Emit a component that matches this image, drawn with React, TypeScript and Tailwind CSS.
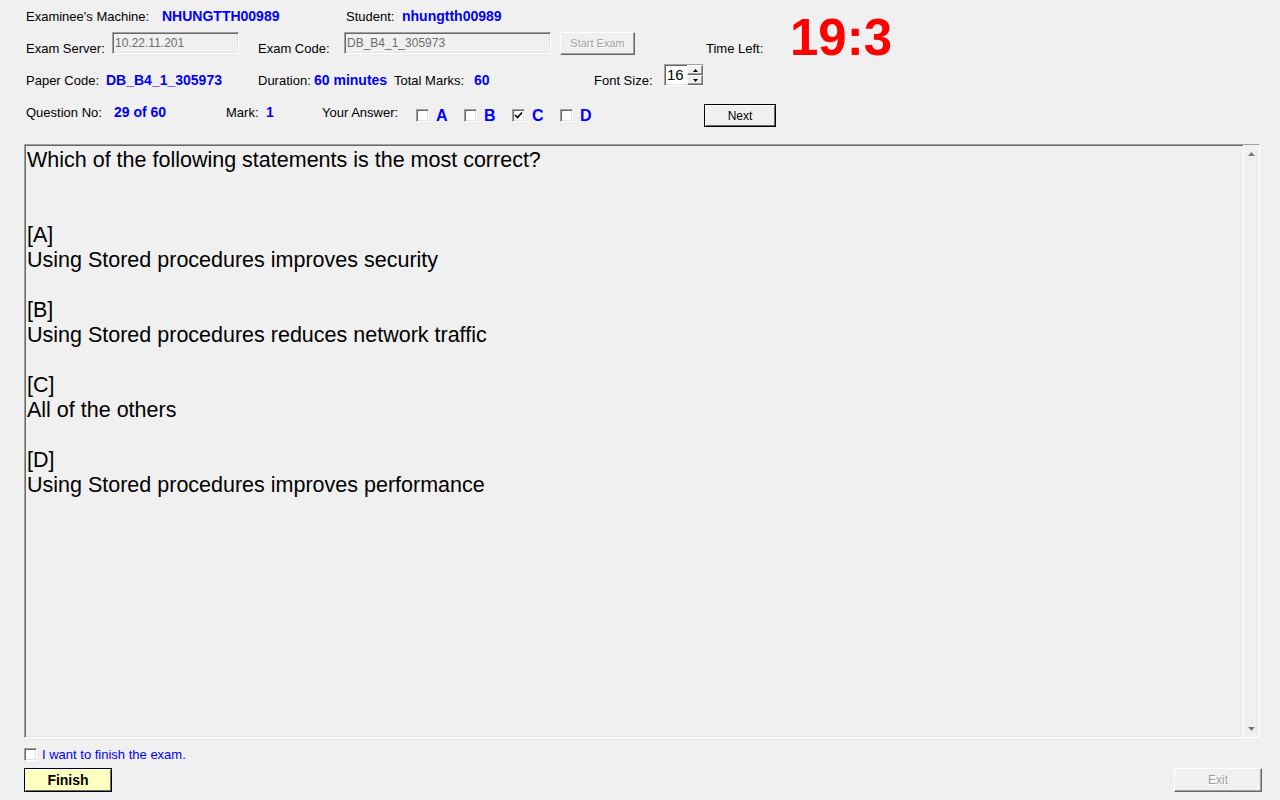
import type { ReactNode } from 'react'

const SUNKEN =
  'border border-t-[#a0a0a0] border-l-[#a0a0a0] border-b-white border-r-white shadow-[inset_1px_1px_0_#696969,inset_-1px_-1px_0_#e3e3e3]'
const RAISED =
  'border border-t-white border-l-white border-b-[#696969] border-r-[#696969] shadow-[inset_-1px_-1px_0_#a0a0a0]'
const DEFAULT_BTN = 'border border-black shadow-[inset_1px_1px_0_#ffffff,inset_-1px_-1px_0_#696969]'

const LINES = [
  'Which of the following statements is the most correct?',
  '',
  '',
  '[A]',
  'Using Stored procedures improves security',
  '',
  '[B]',
  'Using Stored procedures reduces network traffic',
  '',
  '[C]',
  'All of the others',
  '',
  '[D]',
  'Using Stored procedures improves performance',
]

function CheckBox({ checked }: { checked?: boolean }) {
  return (
    <div className={`flex h-[13px] w-[13px] shrink-0 items-center justify-center bg-white ${SUNKEN}`}>
      {checked && (
        <svg width="9" height="9" viewBox="0 0 9 9">
          <polyline points="1,4 3.5,6.5 8,1.5" fill="none" stroke="#000" strokeWidth="1.7" />
        </svg>
      )}
    </div>
  )
}

function Answer({ letter, checked }: { letter: string; checked?: boolean }) {
  return (
    <div className="flex w-[48px] items-start">
      <div className="mt-[13px]">
        <CheckBox checked={checked} />
      </div>
      <span className="mt-[11px] ml-[7px] text-[16px] leading-[18px] font-bold text-[#0000ff]">{letter}</span>
    </div>
  )
}

function Arrow({ down }: { down?: boolean }) {
  return (
    <div className="flex h-[17px] items-center justify-center">
      <svg width="7" height="4" viewBox="0 0 7 4">
        <polygon points={down ? '0,0 7,0 3.5,4' : '0,4 7,4 3.5,0'} fill="#7a7a7a" />
      </svg>
    </div>
  )
}

function Text({ children, className = '' }: { children: ReactNode; className?: string }) {
  return <span className={`mt-[9px] leading-[15px] ${className}`}>{children}</span>
}

export default function App() {
  return (
    <div className="h-[800px] w-full overflow-hidden bg-[#f0f0f0] font-['Liberation_Sans',Arial,sans-serif] text-[13px] text-black">
      {/* top: rows 1-2 + timer */}
      <div className="flex">
        <div className="w-[790px] shrink-0 pl-[26px]">
          <div className="flex h-[32px] items-start">
            <Text className="w-[136px]">Examinee's Machine:</Text>
            <Text className="w-[184px] text-[14px] font-bold text-[#0000ff]">NHUNGTTH00989</Text>
            <Text className="w-[56px]">Student:</Text>
            <Text className="text-[14px] font-bold text-[#0000ff]">nhungtth00989</Text>
          </div>
          <div className="flex h-[32px] items-start">
            <Text className="w-[86px]">Exam Server:</Text>
            <div className={`flex h-[22px] w-[127px] items-center pl-[2px] text-[12px] text-[#6d6d6d] ${SUNKEN}`}>
              10.22.11.201
            </div>
            <Text className="ml-[19px] w-[86px]">Exam Code:</Text>
            <div className={`flex h-[22px] w-[207px] items-center pl-[2px] text-[12px] text-[#6d6d6d] ${SUNKEN}`}>
              DB_B4_1_305973
            </div>
            <div
              className={`ml-[9px] flex h-[23px] w-[75px] items-center justify-center text-[11px] text-[#a0a0a0] [text-shadow:1px_1px_0_#ffffff] ${RAISED}`}
            >
              Start Exam
            </div>
            <Text className="ml-[71px]">Time Left:</Text>
          </div>
        </div>
        <div className="mt-[12px] text-[51px] leading-[51px] font-bold text-[#ff0000]">19:3</div>
      </div>

      {/* row 3 */}
      <div className="flex h-[32px] items-start pl-[26px]">
        <Text className="w-[80px]">Paper Code:</Text>
        <Text className="w-[152px] text-[14px] font-bold text-[#0000ff]">DB_B4_1_305973</Text>
        <Text className="w-[56px]">Duration:</Text>
        <Text className="w-[80px] text-[14px] font-bold text-[#0000ff]">60 minutes</Text>
        <Text className="w-[80px]">Total Marks:</Text>
        <Text className="w-[120px] text-[14px] font-bold text-[#0000ff]">60</Text>
        <Text className="w-[70px]">Font Size:</Text>
        <div className={`flex h-[22px] w-[40px] bg-white ${SUNKEN}`}>
          <span className="flex-1 pl-[2px] text-[15px] leading-[20px]">16</span>
          <div className="flex w-[16px] flex-col">
            <div className={`flex h-[10px] items-center justify-center bg-[#f0f0f0] ${RAISED}`}>
              <svg width="5" height="3" viewBox="0 0 5 3">
                <polygon points="0,3 5,3 2.5,0" fill="#000" />
              </svg>
            </div>
            <div className={`flex h-[10px] items-center justify-center bg-[#f0f0f0] ${RAISED}`}>
              <svg width="5" height="3" viewBox="0 0 5 3">
                <polygon points="0,0 5,0 2.5,3" fill="#000" />
              </svg>
            </div>
          </div>
        </div>
      </div>

      {/* row 4 */}
      <div className="flex h-[32px] items-start pl-[26px]">
        <Text className="w-[88px]">Question No:</Text>
        <Text className="w-[112px] text-[14px] font-bold text-[#0000ff]">29 of 60</Text>
        <Text className="w-[40px]">Mark:</Text>
        <Text className="w-[56px] text-[14px] font-bold text-[#0000ff]">1</Text>
        <Text className="w-[94px]">Your Answer:</Text>
        <Answer letter="A" />
        <Answer letter="B" />
        <Answer letter="C" checked />
        <Answer letter="D" />
        <div
          className={`mt-[8px] ml-[96px] flex h-[23px] w-[72px] items-center justify-center bg-[#f0f0f0] text-[12px] ${DEFAULT_BTN}`}
        >
          Next
        </div>
      </div>

      {/* question box */}
      <div className={`mt-[16px] ml-[24px] flex h-[594px] w-[1236px] ${SUNKEN}`}>
        <div className="flex-1 pt-[3px] pl-[2px] text-[21.5px] leading-[25px]">
          {LINES.map((line, i) => (
            <div key={i} className="h-[25px] whitespace-nowrap">
              {line}
            </div>
          ))}
        </div>
        <div className="flex w-[16px] flex-col justify-between border-l border-white bg-[#f0f0f0]">
          <Arrow />
          <Arrow down />
        </div>
      </div>

      {/* bottom */}
      <div className="mt-[10px] ml-[24px] flex h-[13px] items-center">
        <CheckBox />
        <span className="ml-[5px] leading-[15px] text-[#0000ff]">I want to finish the exam.</span>
      </div>
      <div className="mt-[7px] flex justify-between pr-[18px] pl-[24px]">
        <div
          className={`flex h-[24px] w-[88px] items-center justify-center bg-[#ffffc0] text-[14px] font-bold ${DEFAULT_BTN}`}
        >
          Finish
        </div>
        <div
          className={`flex h-[24px] w-[88px] items-center justify-center text-[12px] text-[#a0a0a0] [text-shadow:1px_1px_0_#ffffff] ${RAISED}`}
        >
          Exit
        </div>
      </div>
    </div>
  )
}
